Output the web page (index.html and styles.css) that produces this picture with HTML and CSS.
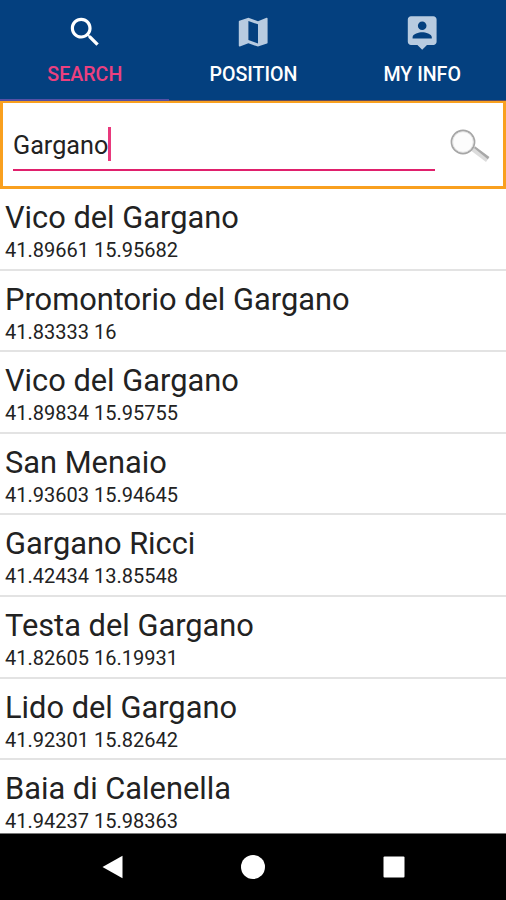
FILE: index.html
```html
<!DOCTYPE html>
<html lang="it">
<head>
<meta charset="UTF-8">
<meta name="viewport" content="width=device-width, initial-scale=1.0">
<title>Search</title>
<link rel="stylesheet" href="styles.css">
</head>
<body>
<nav class="tabs">
<a class="tab active">
<svg viewBox="0 0 24 24"><path d="M15.5 14h-.79l-.28-.27C15.41 12.59 16 11.11 16 9.5 16 5.91 13.09 3 9.5 3S3 5.91 3 9.5 5.91 16 9.5 16c1.61 0 3.09-.59 4.23-1.57l.27.28v.79l5 4.99L20.49 19l-4.99-5zm-6 0C7.01 14 5 11.99 5 9.5S7.01 5 9.5 5 14 7.01 14 9.5 11.99 14 9.5 14z"/></svg>
<span>SEARCH</span>
</a>
<a class="tab">
<svg viewBox="0 0 24 24"><path d="M20.5 3l-.16.03L15 5.1 9 3 3.36 4.9c-.21.07-.36.25-.36.48V20.5c0 .28.22.5.5.5l.16-.03L9 18.9l6 2.1 5.64-1.9c.21-.07.36-.25.36-.48V3.5c0-.28-.22-.5-.5-.5zM15 19l-6-2.11V5l6 2.11V19z"/></svg>
<span>POSITION</span>
</a>
<a class="tab">
<svg viewBox="0 0 24 24"><path d="M19 2H5c-1.11 0-2 .9-2 2v14c0 1.1.89 2 2 2h4l3 3 3-3h4c1.1 0 2-.9 2-2V4c0-1.1-.9-2-2-2zm-7 3.3c1.49 0 2.7 1.21 2.7 2.7 0 1.49-1.21 2.7-2.7 2.7-1.49 0-2.7-1.21-2.7-2.7 0-1.49 1.21-2.7 2.7-2.7zM18 16H6v-.9c0-2 4-3.1 6-3.1s6 1.1 6 3.1v.9z"/></svg>
<span>MY INFO</span>
</a>
</nav>
<div class="search-box">
<div class="field"><span>Gargano</span><i class="caret"></i></div>
<svg class="lens" viewBox="0 0 42 38">
<path d="M22.500 23l3.500-4.500 14.500 10.500-3.500 5z" fill="#dcdcdc"/>
<path d="M25 20l1.300-1.500 14 10.500-1.500 2.200z" fill="#a8a8a8"/>
<circle cx="14" cy="14" r="11.500" fill="#fcfcfc" stroke="#a6a6a6" stroke-width="1.800"/>
<circle cx="14" cy="14" r="10.300" fill="none" stroke="#ddd" stroke-width="0.800"/>
</svg>
</div>
<ul class="results">
<li><h2>Vico del Gargano</h2><p>41.89661 15.95682</p></li>
<li><h2>Promontorio del Gargano</h2><p>41.83333 16</p></li>
<li><h2>Vico del Gargano</h2><p>41.89834 15.95755</p></li>
<li><h2>San Menaio</h2><p>41.93603 15.94645</p></li>
<li><h2>Gargano Ricci</h2><p>41.42434 13.85548</p></li>
<li><h2>Testa del Gargano</h2><p>41.82605 16.19931</p></li>
<li><h2>Lido del Gargano</h2><p>41.92301 15.82642</p></li>
<li><h2>Baia di Calenella</h2><p>41.94237 15.98363</p></li>
</ul>
<footer class="navbar">
<svg viewBox="0 0 24 26"><path d="M1.500 13L21.500 1.800v22.400z"/></svg>
<svg viewBox="0 0 24 26"><circle cx="12" cy="13" r="12"/></svg>
<svg viewBox="0 0 24 26"><rect x="1.500" y="2.500" width="21" height="21" rx="1"/></svg>
</footer>
</body>
</html>
```

FILE: styles.css
```css
* {
box-sizing: border-box;
margin: 0;
padding: 0;
}

body {
height: 900px;
display: flex;
flex-direction: column;
overflow: hidden;
background-color: #fff;
color: #222;
font-family: Roboto, sans-serif;
}

/* Tabs */
.tabs {
display: grid;
grid-template-columns: repeat(3, 1fr);
flex: none;
height: 101px;
background-color: #04407f;
}

.tab {
display: flex;
flex-direction: column;
align-items: center;
padding: 13px 0 0 1px;
border-bottom: 1px solid #604d60;
color: #fff;
font-size: 19.6px;
font-weight: 500;
line-height: 24px;
}

.tab svg {
width: 38.4px;
height: 38.4px;
margin-bottom: 12px;
fill: #b8cbe0;
}

.tab.active {
color: #ec407f;
border-bottom: 2px solid #5650a5;
}

.tab.active svg {
fill: #fff;
}

/* Search */
.search-box {
display: flex;
flex: none;
justify-content: space-between;
height: 88px;
padding: 22px 12px 0 10px;
border: 3px solid #f9a01f;
border-top-width: 2px;
}

.field {
display: flex;
width: 422px;
height: 46px;
border-bottom: 2px solid #e0206c;
font-size: 25.2px;
line-height: 42px;
}

.caret {
width: 3px;
height: 34px;
margin-top: 2px;
background-color: #e8397c;
}

.lens {
width: 42px;
height: 38px;
margin-top: 3px;
}

/* Results */
.results {
flex: 1;
min-height: 0;
overflow: hidden;
list-style: none;
}

.results li {
height: 81.6px;
padding: 11px 5px 0;
border-bottom: 2px solid #e3e3e3;
}

.results h2 {
font-size: 30.8px;
font-weight: 400;
line-height: 36px;
}

.results p {
font-size: 20px;
line-height: 29px;
}

/* Android buttons */
.navbar {
display: flex;
flex: none;
justify-content: center;
gap: 116.500px;
height: 67px;
padding-top: 20px;
border-top: 1px solid #777;
background-color: #000;
}

.navbar svg {
width: 24px;
height: 26px;
fill: #fff;
}
```
